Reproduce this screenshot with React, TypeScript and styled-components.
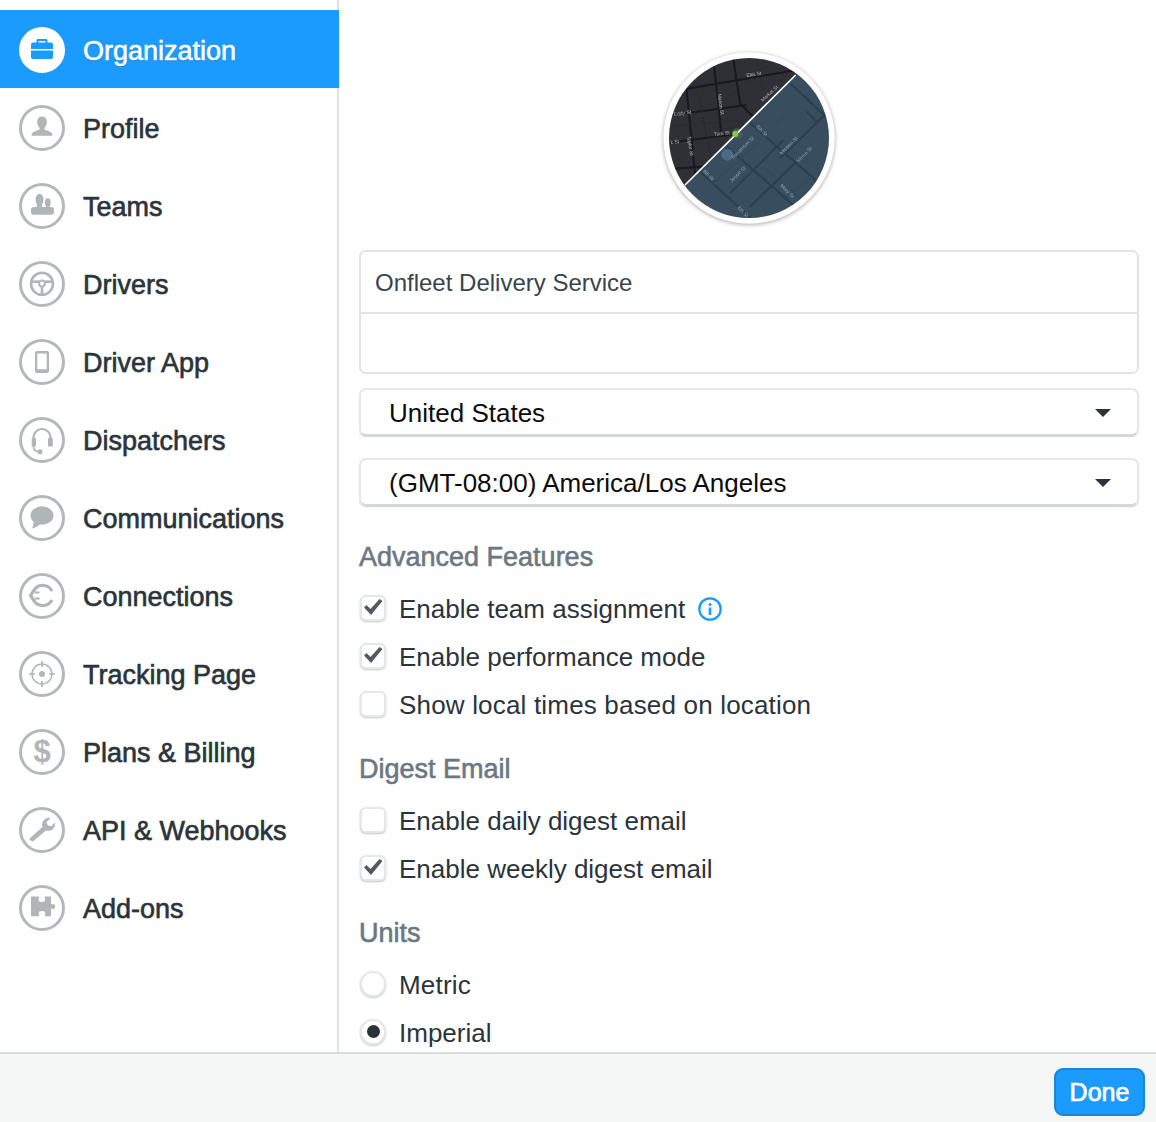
import React from "react";
import styled, { createGlobalStyle } from "styled-components";

const Global = createGlobalStyle`
  html, body { margin: 0; padding: 0; background: #fff; }
  body { font-family: "Liberation Sans", Arial, sans-serif; color: #2b343b; -webkit-font-smoothing: antialiased; }
`;

const Page = styled.div`
  width: 1156px;
  height: 1122px;
  display: flex;
  flex-direction: column;
  overflow: hidden;
`;
const Body = styled.div`
  flex: 1;
  min-height: 0;
  display: flex;
`;
const Sidebar = styled.nav`
  width: 339px;
  box-sizing: border-box;
  flex: none;
  border-right: 2px solid #e1e2e3;
  padding-top: 10px;
`;
const Row = styled.div<{ $active?: boolean }>`
  height: 78px;
  box-sizing: border-box;
  padding: 2px 0 0 19px;
  margin-right: ${(p) => (p.$active ? "-2px" : "0")};
  display: flex;
  align-items: center;
  gap: 18px;
  background: ${(p) => (p.$active ? "#1c9bff" : "transparent")};
  color: ${(p) => (p.$active ? "#fff" : "#2b343b")};
`;
const Badge = styled.span<{ $active?: boolean }>`
  width: 46px;
  height: 46px;
  box-sizing: border-box;
  flex: none;
  border-radius: 50%;
  border: 3px solid ${(p) => (p.$active ? "#fff" : "#b3b8ba")};
  background: ${(p) => (p.$active ? "#fff" : "transparent")};
  color: ${(p) => (p.$active ? "#1c9bff" : "#b0b5b7")};
  display: flex;
  align-items: center;
  justify-content: center;
  svg { display: block; flex: none; }
`;
const RowLabel = styled.span<{ $active?: boolean }>`
  font-size: 27px;
  line-height: 30px;
  padding-top: 1px;
  -webkit-text-stroke: 0.6px currentColor;
  text-shadow: ${(p) => (p.$active ? "0 1px 1px rgba(0,0,0,.25)" : "0 1px 1px rgba(0,0,0,.1)")};
`;
const Main = styled.main`
  flex: 1;
  min-width: 0;
  padding: 52px 17px 0 20px;
  overflow: hidden;
`;
const AvatarWrap = styled.div`
  display: flex;
  justify-content: center;
  margin-bottom: 26px;
`;
const AvatarSvg = styled.svg`
  display: block;
  filter: drop-shadow(0 1px 2px rgba(0, 0, 0, 0.35));
`;
const MapLayer = styled.g`
  filter: blur(1px);
`;
const FieldGroup = styled.div`
  border: 2px solid #e2e3e4;
  border-radius: 7px;
  overflow: hidden;
`;
const Field = styled.input<{ $tall?: boolean }>`
  display: block;
  width: 100%;
  box-sizing: border-box;
  height: ${(p) => (p.$tall ? "58px" : "62px")};
  border: 0;
  border-bottom: ${(p) => (p.$tall ? "0" : "2px solid #e2e3e4")};
  padding: 2px 14px 0;
  font: 24px "Liberation Sans", Arial, sans-serif;
  color: #37444e;
  outline: none;
  background: #fff;
`;
const Select = styled.div<{ $gap: number }>`
  height: 48px;
  box-sizing: border-box;
  margin-top: ${(p) => p.$gap}px;
  border: 2px solid #e6e7e8;
  border-bottom-color: #d5d7d9;
  border-radius: 7px;
  box-shadow: 0 1px 1px rgba(60, 70, 80, 0.25);
  display: flex;
  align-items: center;
  justify-content: space-between;
  padding: 2px 26px 0 28px;
  font-size: 26px;
  color: #0c0c0c;
`;
const Caret = styled.span`
  width: 0;
  height: 0;
  border-left: 8px solid transparent;
  border-right: 8px solid transparent;
  border-top: 8px solid #2b343b;
`;
const Heading = styled.h3<{ $top: number }>`
  margin: ${(p) => p.$top}px 0 0;
  height: 30px;
  font-size: 27px;
  line-height: 30px;
  font-weight: normal;
  -webkit-text-stroke: 0.6px currentColor;
  color: #6b7883;
`;
const Options = styled.div`
  margin-top: 22px;
  display: flex;
  flex-direction: column;
  gap: 18px;
`;
const Option = styled.label<{ $spread?: boolean }>`
  height: 30px;
  display: flex;
  align-items: center;
  gap: 13px;
  font-size: 26px;
  line-height: 30px;
  letter-spacing: ${(p) => (p.$spread ? "0.18px" : "0")};
  color: #2b343b;
`;
const Check = styled.span`
  width: 26px;
  height: 26px;
  box-sizing: border-box;
  flex: none;
  margin: -3px 0 0 1px;
  border: 2px solid #e6e7e8;
  border-radius: 6px;
  background: #fff;
  box-shadow: 0 1px 2px rgba(60, 70, 80, 0.3);
  display: flex;
  align-items: center;
  justify-content: center;
`;
const Radio = styled(Check)`
  border-radius: 50%;
`;
const Dot = styled.span`
  width: 13px;
  height: 13px;
  border-radius: 50%;
  background: #2a3238;
`;
const Info = styled.svg`
  flex: none;
`;
const Footer = styled.footer`
  height: 70px;
  box-sizing: border-box;
  flex: none;
  border-top: 2px solid #d9dada;
  background: #f5f7f7;
  display: flex;
  align-items: flex-start;
  justify-content: flex-end;
  padding: 14px 11px 0 0;
`;
const Done = styled.button`
  width: 91px;
  height: 48px;
  border: 2px solid #1a86d8;
  border-radius: 9px;
  background: #1c9bff;
  color: #fff;
  font: 25px "Liberation Sans", Arial, sans-serif;
  -webkit-text-stroke: 0.7px #fff;
  padding: 0;
`;

const Glyph = ({ children }: { children: React.ReactNode }) => (
  <svg width="46" height="46" viewBox="0 0 46 46" style={{ margin: -3 }} fill="currentColor" stroke="none">
    {children}
  </svg>
);

const icons: Record<string, React.ReactNode> = {
  Organization: (
    <Glyph>
      <path d="M17.500 16v-2.300c0-1 .7-1.700 1.700-1.700h7.600c1 0 1.700.7 1.700 1.700V16h-2v-2.100h-7V16z" />
      <path d="M12 17.500c0-1.100.9-2 2-2h18c1.100 0 2 .9 2 2v4.500H12z" />
      <path d="M12 23.500h22V30c0 1.100-.9 2-2 2H14c-1.100 0-2-.9-2-2z" />
    </Glyph>
  ),
  Profile: (
    <Glyph>
      <path d="M23 11.500c3 0 4.800 2.200 4.800 5.200 0 2.600-1.200 5-2.200 6-.4.7-.2 1.700.6 2.100 2.400 1.100 6.200 1.800 7.200 4.400.3.800-.2 1.500-1 1.500H13.600c-.8 0-1.300-.7-1-1.500 1-2.600 4.800-3.300 7.200-4.400.8-.4 1-1.400.6-2.100-1-1-2.200-3.400-2.200-6 0-3 1.800-5.200 4.800-5.200z" />
    </Glyph>
  ),
  Teams: (
    <Glyph>
      <ellipse cx="20.500" cy="16.500" rx="4" ry="5.800" />
      <rect x="17.800" y="19" width="5.400" height="6" />
      <ellipse cx="28.800" cy="19.500" rx="2.900" ry="4.300" />
      <rect x="27" y="21" width="3.600" height="4" />
      <rect x="12" y="24" width="23" height="7.800" rx="2.800" />
    </Glyph>
  ),
  Drivers: (
    <Glyph>
      <g fill="none" stroke="currentColor" strokeWidth="2.600">
        <circle cx="23" cy="22.800" r="11" />
        <circle cx="23" cy="22.500" r="2.900" strokeWidth="2" />
        <path d="M12.500 21c2.500-.5 5-.5 7.500-.2M33.500 21c-2.500-.5-5-.5-7.500-.2M23 25.500v8" />
      </g>
    </Glyph>
  ),
  "Driver App": (
    <Glyph>
      <path
        fillRule="evenodd"
        d="M18 12h10c1.100 0 2 .9 2 2v18c0 1.100-.9 2-2 2H18c-1.100 0-2-.9-2-2V14c0-1.100.9-2 2-2zm.300 2.500v15.800h9.400V14.500z"
      />
    </Glyph>
  ),
  Dispatchers: (
    <Glyph>
      <path d="M14.500 24v-3.500a8.500 8.500 0 0 1 17 0V24" fill="none" stroke="currentColor" strokeWidth="2.200" />
      <rect x="12.700" y="21" width="4.300" height="8.500" rx="1" />
      <rect x="29" y="21" width="4.800" height="8.500" rx="1" />
      <path d="M14.500 29c0 3.500 2 5.500 5 5.700" fill="none" stroke="currentColor" strokeWidth="1.600" />
      <circle cx="21" cy="34.800" r="2.500" />
    </Glyph>
  ),
  Communications: (
    <Glyph>
      <ellipse cx="23" cy="20.500" rx="11.500" ry="9.300" />
      <path d="M15 26l-1.800 7.500c3-.7 6-2.500 8-4.500z" />
    </Glyph>
  ),
  Connections: (
    <Glyph>
      <g fill="none" stroke="currentColor" strokeWidth="3.200">
        <path d="M33 18A10.500 10.500 0 0 0 15.500 16.500L11.500 22.500 15.500 28.500A10.500 10.500 0 0 0 33 27" />
        <path d="M16 19.500h4.500M16 25.500h4.500" strokeWidth="2.200" />
      </g>
    </Glyph>
  ),
  "Tracking Page": (
    <Glyph>
      <g fill="none" stroke="currentColor" strokeWidth="1.500">
        <circle cx="23" cy="23" r="10" />
        <path d="M23 10v6M23 30v6M10 23h6M30 23h6" strokeWidth="1.700" />
      </g>
      <circle cx="23" cy="23" r="3" />
    </Glyph>
  ),
  "Plans & Billing": (
    <Glyph>
      <text x="23" y="33" textAnchor="middle" fontFamily="Liberation Sans, Arial, sans-serif" fontWeight="700" fontSize="31">
        $
      </text>
    </Glyph>
  ),
  "API & Webhooks": (
    <Glyph>
      <path d="M10.500 31.500L23.500 20c-1-3.500.3-6.500 2.500-8 2-1.200 4-1.500 5.500-.8L27.500 15l1.300 3.500 3.500.7 3.500-3.700c.6 2.500-.2 5-2 6.800-2 1.500-4.500 1.900-6.800 1.200L14.500 34c-1.500 1-4-1-4-2.500z" />
    </Glyph>
  ),
  "Add-ons": (
    <Glyph>
      <path d="M12 11.500h7.500c.6 0 .8.400.6 1-.4 1-.7 1.500-.7 2.300 0 1.300 1.500 2.200 3.500 2.200s3.400-.9 3.400-2.200c0-.8-.3-1.300-.7-2.300-.2-.6 0-1 .6-1H32v7.300c0 .7.500.9 1 .6.400-.3.900-.5 1.400-.5 1 0 1.600 1 1.600 2.500s-.6 2.500-1.600 2.500c-.5 0-1-.2-1.400-.5-.5-.3-1-.1-1 .6v7.300h-5.500c-.6 0-.8-.4-.6-1 .3-1 .5-1.500.5-2.200 0-1.200-1.200-2-3.400-2s-3.400.8-3.400 2c0 .7.200 1.200.5 2.200.2.600 0 1-.6 1H12z" />
    </Glyph>
  ),
};

const navItems = Object.keys(icons);

const CheckMark = () => (
  <svg width="20" height="18" viewBox="0 0 20 18" style={{ marginTop: -1 }}>
    <path d="M1 9.500L3.500 7l4 4 9-10 3 2L8 17z" fill="#4f5b61" />
  </svg>
);

const Avatar = () => (
  <AvatarSvg width="172" height="172" viewBox="39 36 516 516">
    <defs>
      <clipPath id="mapClip">
        <circle cx="297" cy="294" r="240" />
      </clipPath>
    </defs>
    <circle cx="297" cy="294" r="257" fill="#fff" />
    <g clipPath="url(#mapClip)">
      <MapLayer>
        <rect x="40" y="40" width="520" height="520" fill="#2e3035" />
        <g fill="none" stroke="#18191d" strokeWidth="6">
          <path d="M90 150L440 90M190 55L215 290M250 55L270 190L350 270M110 150L135 400M70 225L290 195M40 310L260 282M40 388L160 380" />
        </g>
        <g fill="none" stroke="#26282d" strokeWidth="2">
          <path d="M150 165L170 300M320 60L340 140M60 260L280 240M130 110L200 420M360 70L200 200" />
        </g>
        <polygon points="105,435 437,105 560,105 560,560 105,560" fill="#384d5e" />
        <g fill="none" stroke="#2a3f50" strokeWidth="6">
          <path d="M150 395L330 560M300 250L520 440M230 320L470 530M390 355L540 210M240 460L400 300M300 500L470 335M470 215L505 250M420 130L560 260" />
        </g>
        <g fill="none" stroke="#324858" strokeWidth="3">
          <path d="M180 440L320 310M340 380L480 500M400 480L500 400M370 260L410 220" />
        </g>
        <circle cx="232" cy="344" r="18" fill="#4d6a85" />
        <circle cx="262" cy="281" r="16" fill="#4c5a60" />
        <g fontFamily="Liberation Sans, Arial, sans-serif" fontSize="15" fill="#b4b8bc">
          <text x="290" y="112" transform="rotate(-10 290 112)">Ellis St</text>
          <text x="72" y="228" transform="rotate(-8 72 228)">Eddy St</text>
          <text x="192" y="288" transform="rotate(-6 192 288)">Turk St</text>
          <text x="62" y="312" transform="rotate(-6 62 312)">k St</text>
          <text x="203" y="162" transform="rotate(82 203 162)">Mason St</text>
          <text x="111" y="290" transform="rotate(80 111 290)">Taylor St</text>
          <text x="338" y="186" transform="rotate(-42 338 186)">Market St</text>
        </g>
        <g fontFamily="Liberation Sans, Arial, sans-serif" fontSize="15" fill="#93a6b4">
          <text x="250" y="358" transform="rotate(-45 250 358)">Stevenson St</text>
          <text x="245" y="428" transform="rotate(-45 245 428)">Jessie St</text>
          <text x="395" y="345" transform="rotate(-45 395 345)">Mission St</text>
          <text x="445" y="368" transform="rotate(-45 445 368)">Minna St</text>
          <text x="318" y="262" transform="rotate(45 318 262)">5th St</text>
          <text x="390" y="438" transform="rotate(45 390 438)">Mary St</text>
          <text x="158" y="395" transform="rotate(45 158 395)">6th St</text>
          <text x="262" y="505" transform="rotate(45 262 505)">6th St</text>
        </g>
      </MapLayer>
      <line x1="105" y1="435" x2="437" y2="105" stroke="#fff" strokeWidth="5" />
      <circle cx="256" cy="282" r="9" fill="#7ed321" />
    </g>
  </AvatarSvg>
);

const checks = (items: [string, boolean, boolean?, boolean?][]) =>
  items.map(([label, on, info, spread]) => (
    <Option key={label} $spread={spread}>
      <Check>{on && <CheckMark />}</Check>
      <span>{label}</span>
      {info && (
        <Info width="24" height="24" viewBox="0 0 24 24">
          <circle cx="12" cy="12" r="10.700" fill="none" stroke="#1c9bff" strokeWidth="2.300" />
          <circle cx="12" cy="7.500" r="1.500" fill="#1c9bff" />
          <rect x="10.700" y="10.500" width="2.600" height="7.500" fill="#1c9bff" />
        </Info>
      )}
    </Option>
  ));

export default function App() {
  return (
    <Page>
      <Global />
      <Body>
        <Sidebar>
          {navItems.map((name, i) => (
            <Row key={name} $active={i === 0}>
              <Badge $active={i === 0}>{icons[name]}</Badge>
              <RowLabel $active={i === 0}>{name}</RowLabel>
            </Row>
          ))}
        </Sidebar>
        <Main>
          <AvatarWrap>
            <Avatar />
          </AvatarWrap>
          <FieldGroup>
            <Field readOnly value="Onfleet Delivery Service" />
            <Field $tall readOnly value="" />
          </FieldGroup>
          <Select $gap={14}>
            <span>United States</span>
            <Caret />
          </Select>
          <Select $gap={22}>
            <span>(GMT-08:00) America/Los Angeles</span>
            <Caret />
          </Select>
          <Heading $top={36}>Advanced Features</Heading>
          <Options>
            {checks([
              ["Enable team assignment", true, true],
              ["Enable performance mode", true],
              ["Show local times based on location", false, false, true],
            ])}
          </Options>
          <Heading $top={34}>Digest Email</Heading>
          <Options>
            {checks([
              ["Enable daily digest email", false],
              ["Enable weekly digest email", true],
            ])}
          </Options>
          <Heading $top={34}>Units</Heading>
          <Options>
            <Option $spread>
              <Radio />
              <span>Metric</span>
            </Option>
            <Option>
              <Radio>
                <Dot />
              </Radio>
              <span>Imperial</span>
            </Option>
          </Options>
        </Main>
      </Body>
      <Footer>
        <Done>Done</Done>
      </Footer>
    </Page>
  );
}
